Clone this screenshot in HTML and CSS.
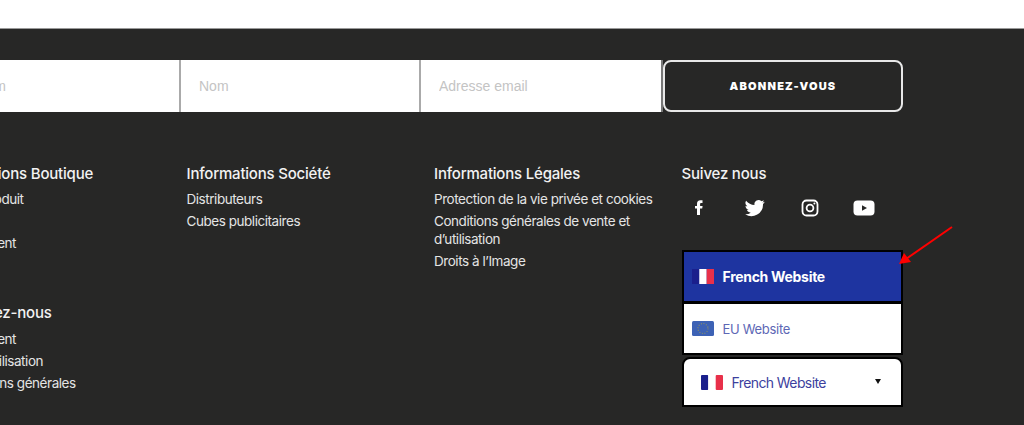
FILE: index.html
```html
<!DOCTYPE html>

<html>

<head>
  <meta http-equiv="Content-Type" content="text/html; charset=UTF-8">
  <meta name="viewport" content="width=device-width, initial-scale=1">
  <link rel="stylesheet" href="styles.css">
</head>

<body>
  <div class="top"></div>
  <footer class="footer">
    <form class="news">
      <input type="text" class="field field-first" placeholder="Prénom">
      <input type="text" class="field field-mid" placeholder="Nom">
      <input type="text" class="field field-last" placeholder="Adresse email">
      <button type="button" class="subscribe">Abonnez-vous</button>
    </form>

    <div class="cols">
      <div class="col">
        <h4>Informations Boutique</h4>
        <ul>
          <li>Fiches produit</li>
          <li>FAQ</li>
          <li>Abonnement</li>
        </ul>
        <h4 class="second">Contactez-nous</h4>
        <ul>
          <li>Abonnement</li>
          <li>Mode d’utilisation</li>
          <li>Informations générales</li>
        </ul>
      </div>
      <div class="col">
        <h4>Informations Société</h4>
        <ul>
          <li>Distributeurs</li>
          <li>Cubes publicitaires</li>
        </ul>
      </div>
      <div class="col">
        <h4>Informations Légales</h4>
        <ul>
          <li>Protection de la vie privée et cookies</li>
          <li>Conditions générales de vente et d’utilisation</li>
          <li>Droits à l’Image</li>
        </ul>
      </div>
      <div class="col">
        <h4>Suivez nous</h4>
        <div class="social">
          <svg width="20" height="20" viewBox="0 0 20 20"><path fill="#fff" d="M7 17v-6.500H5V8h2V6c0-2.500 1.200-3.700 3.300-3.700H12.500v2.800h-1.200c-.9 0-1.200.4-1.200 1.100V8h2.500l-.4 2.500H10V17z"/></svg>
          <svg width="20" height="20" viewBox="0 0 24 24"><path fill="#fff" d="M23.500 4.600c-.9.400-1.800.7-2.800.8 1-.6 1.800-1.500 2.100-2.700-.9.600-2 1-3.100 1.200A4.900 4.900 0 0 0 11.400 8.400 13.900 13.900 0 0 1 1.300 3.300a4.900 4.900 0 0 0 1.500 6.500c-.8 0-1.500-.2-2.200-.6 0 2.400 1.700 4.400 3.900 4.900-.7.200-1.500.2-2.200.1.600 2 2.400 3.400 4.600 3.400A9.900 9.900 0 0 1 .2 19.600 13.900 13.900 0 0 0 21.600 7.200c1-.7 1.800-1.600 1.900-2.600z"/></svg>
          <svg width="20" height="20" viewBox="0 0 20 20"><rect x="2.500" y="2.500" width="15" height="15" rx="4" fill="none" stroke="#fff" stroke-width="1.800"/><circle cx="10" cy="10" r="3.400" fill="none" stroke="#fff" stroke-width="1.800"/><circle cx="14.400" cy="5.600" r="1" fill="#fff"/></svg>
          <svg class="yt" width="22" height="20" viewBox="0 0 22 20"><rect x="0.500" y="2.500" width="21" height="15" rx="4" fill="#fff"/><path fill="#272726" d="M9 7.200 14 10l-5 2.800z"/></svg>
        </div>
        <div class="sites">
          <a class="site active">
            <svg class="flag" width="22" height="15" viewBox="0 0 22 15"><rect width="7.300" height="15" fill="#1a1f8c"/><rect x="7.300" width="7.400" height="15" fill="#fff"/><rect x="14.700" width="7.300" height="15" fill="#e8304a"/></svg>
            French Website
          </a>
          <a class="site">
            <svg class="flag" width="22" height="15" viewBox="0 0 22 15"><rect width="22" height="15" rx="1.500" fill="#3d62b5"/><circle cx="11" cy="7.500" r="5" fill="none" stroke="#8b8f63" stroke-width="1.200" stroke-dasharray="1 1.600"/></svg>
            EU Website
          </a>
          <div class="picker">
            <svg class="flag" width="22" height="15" viewBox="0 0 22 15"><rect width="7.300" height="15" rx="1" fill="#1a1f8c"/><rect x="7.300" width="7.400" height="15" fill="#fff"/><rect x="14.700" width="7.300" height="15" rx="1" fill="#e8304a"/></svg>
            <span class="picker-name">French Website</span>
            <span class="caret"></span>
          </div>
        </div>
      </div>
    </div>
  </footer>

  <svg class="arrow" width="60" height="46" viewBox="0 0 60 46"><path stroke="#f00" stroke-width="2" fill="none" d="M56 3 10 35"/><path fill="#f00" d="M3 40 8 29 15 38z"/></svg>
</body>

</html>
```

FILE: styles.css
```css
html,
body {
  margin: 0;
  height: 425px;
  overflow: hidden;
  background: #272726;
}

body {
  position: relative;
  font-family: Inter, "Noto Sans", sans-serif;
}

.top {
  height: 29px;
  background: #fff;
  border-bottom: 1px solid #999;
  box-sizing: border-box;
}

.footer {
  background: #272726;
  padding-top: 31px;
  margin-left: -61px;
  color: #f2f2f2;
}

.news {
  display: flex;
  width: 964px;
  height: 52px;
}

.field {
  box-sizing: border-box;
  border: 0;
  border-right: 2px solid #aaa;
  background: #fff;
  padding: 0 18px;
  font-family: "Liberation Sans", Arial, sans-serif;
  font-size: 14px;
}

.field-first {
  width: 242px;
}

.field-mid {
  width: 240px;
}

.field-last {
  width: 242px;
  border-right-color: #777;
}

.field::placeholder {
  color: #c4c4c4;
}

.subscribe {
  flex: 1;
  background: #272726;
  border: 2px solid #e8e8e8;
  border-radius: 8px;
  color: #fff;
  font-family: Inter, sans-serif;
  font-weight: 900;
  font-size: 11px;
  letter-spacing: 1.2px;
  text-transform: uppercase;
}

.cols {
  display: grid;
  grid-template-columns: repeat(4, 247.5px);
  padding-top: 53px;
}

.col {
  padding-right: 26px;
}

h4 {
  margin: 0 0 7px;
  font-size: 15px;
  line-height: 18px;
  font-weight: 500;
  letter-spacing: -0.2px;
}

h4.second {
  margin: 52px 0 8px;
}

ul {
  list-style: none;
  margin: 0;
  padding: 0;
  font-size: 13.5px;
  line-height: 18px;
  font-weight: 400;
  letter-spacing: -0.45px;
  color: #e4e4e4;
}

li {
  margin-bottom: 4px;
}

.social {
  display: flex;
  gap: 35px;
  align-items: center;
  padding: 5px 0 0 8px;
  height: 26px;
}

.yt {
  margin-left: -2px;
}

.sites {
  margin-top: 30px;
  width: 221px;
}

.site,
.picker {
  display: flex;
  align-items: center;
  box-sizing: border-box;
  border: 2px solid #000;
  background: #fff;
}

.site {
  height: 53px;
  padding-left: 8px;
  margin-top: -1px;
  color: #5d67b5;
  font-size: 13px;
  letter-spacing: -0.3px;
}

.site.active {
  background: #1e34a0;
  color: #fff;
  font-size: 14px;
  font-weight: 700;
}

.flag {
  margin-right: 9px;
  flex: none;
}

.picker {
  height: 50px;
  margin-top: 2px;
  padding: 0 20px 0 17px;
  border-radius: 8px 8px 0 0;
  color: #3d3f9e;
  font-size: 14px;
  letter-spacing: -0.6px;
}

.picker-name {
  flex: 1;
}

.caret {
  border: 3px solid transparent;
  border-top: 5px solid #111;
  margin-top: 1px;
}

.arrow {
  position: absolute;
  left: 896px;
  top: 224px;
}
```
